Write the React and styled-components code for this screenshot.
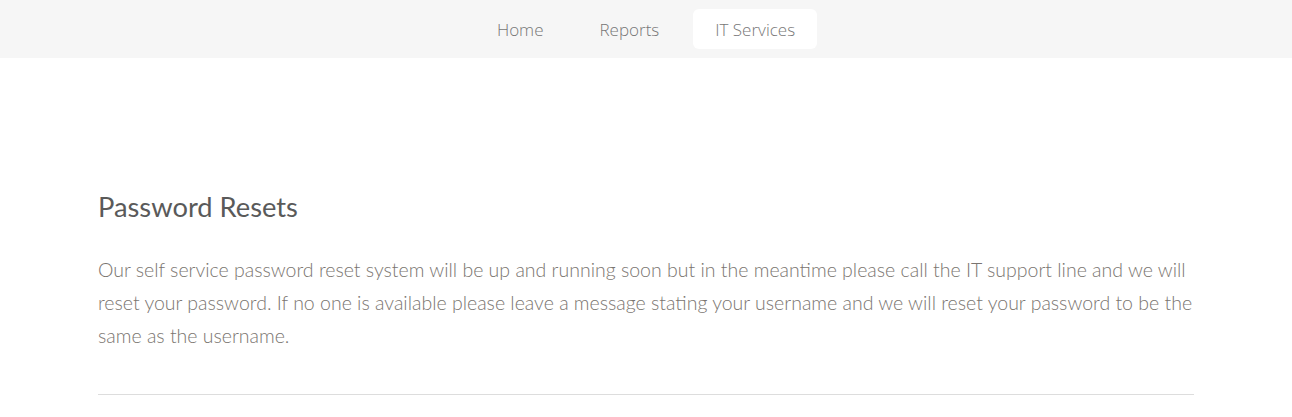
import styled, { createGlobalStyle } from "styled-components";

const GlobalStyle = createGlobalStyle`
  body {
    margin: 0;
    background: #ffffff;
    font-family: "Open Sans", "Liberation Sans", sans-serif;
  }
`;

const NavBar = styled.nav`
  height: 58px;
  background: #f6f6f6;
  display: flex;
  align-items: center;
  justify-content: center;
  gap: 12px;
`;

const NavItem = styled.a`
  height: 40px;
  padding: 0 22px;
  display: flex;
  align-items: center;
  border-radius: 6px;
  font-family: "Open Sans", sans-serif;
  font-weight: 300;
  font-size: 17px;
  color: #777;
  text-decoration: none;
  background: ${(p) => (p.active ? "#ffffff" : "transparent")};
`;

const Main = styled.main`
  width: 1096px;
  margin: 0 auto;
  padding-top: 131px;
`;

const Heading = styled.h2`
  margin: 0 0 28px;
  font-family: "Lato", sans-serif;
  font-weight: 400;
  font-size: 27.3px;
  line-height: 36px;
  color: #5a5a5a;
`;

const Para = styled.p`
  margin: 0;
  font-family: "Lato", sans-serif;
  font-weight: 300;
  font-size: 19.5px;
  line-height: 33px;
  color: #7a7570;
`;

const Rule = styled.hr`
  border: none;
  border-top: 1px solid #dddddd;
  margin: 42px 0 0;
`;

const App = () => {
  return (
    <>
      <GlobalStyle />
      <NavBar>
        <NavItem>Home</NavItem>
        <NavItem>Reports</NavItem>
        <NavItem active>IT Services</NavItem>
      </NavBar>
      <Main>
        <Heading>Password Resets</Heading>
        <Para>
          Our self service password reset system will be up and running soon but in the meantime please call the IT
          support line and we will reset your password. If no one is available please leave a message stating your
          username and we will reset your password to be the same as the username.
        </Para>
        <Rule />
      </Main>
    </>
  );
};

export default App;
